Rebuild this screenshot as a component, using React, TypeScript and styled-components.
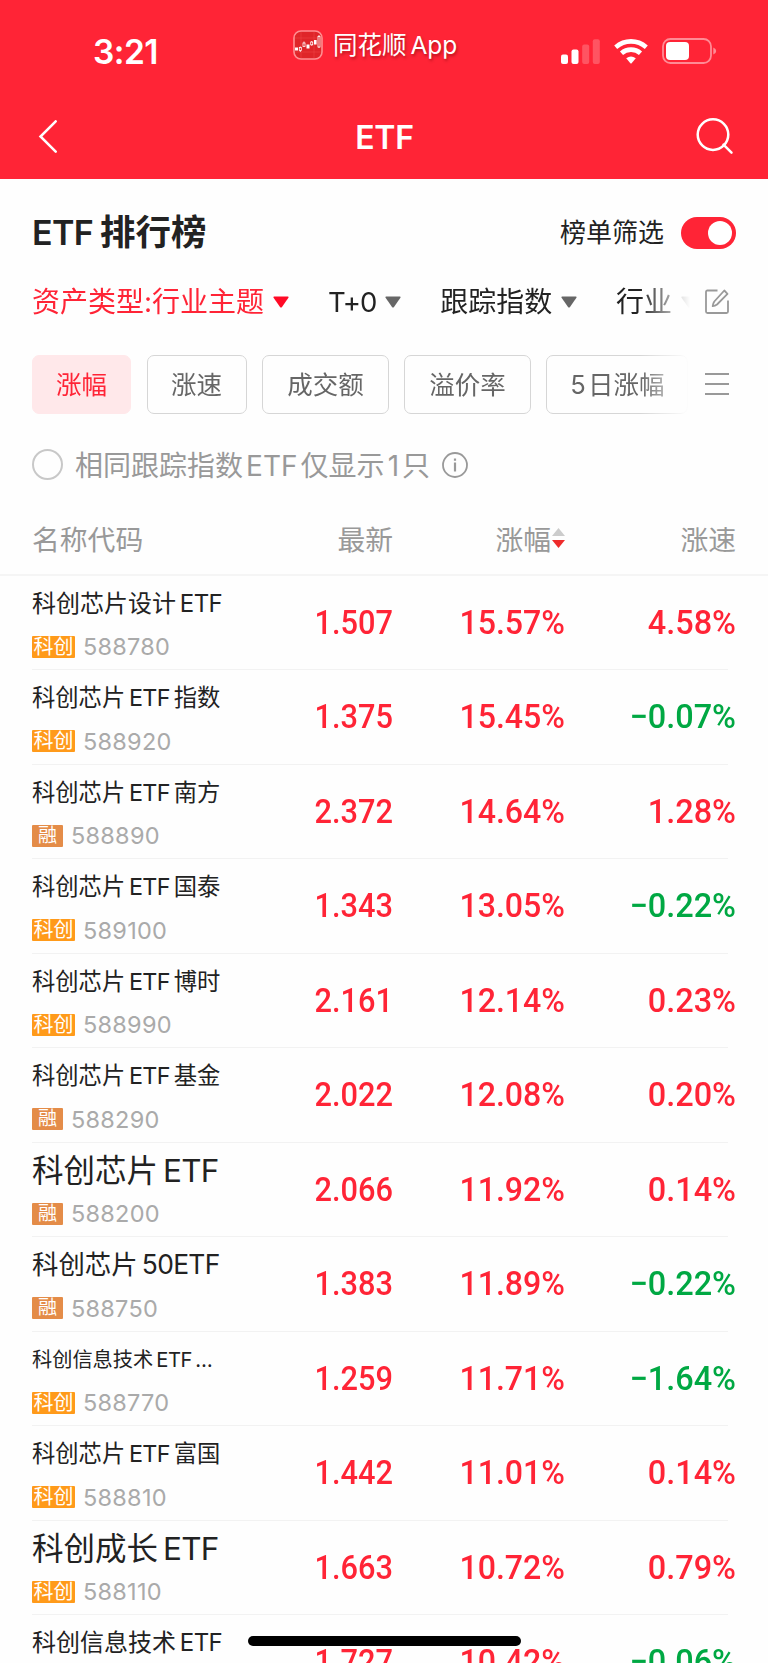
import React from 'react';
import styled, { createGlobalStyle } from 'styled-components';

const Global = createGlobalStyle`
  * { box-sizing: border-box; }
  html, body { margin: 0; background: #fff; }
  body { font-family: Inter, "Noto Sans CJK SC", sans-serif; width: 768px; height: 1663px; overflow: hidden; }
  svg { flex: none; display: block; }
`;

const Screen = styled.div`
  position: relative;
  width: 768px;
  height: 1663px;
  overflow: hidden;
  background: #fefefe;
  color: #222;
`;
const Header = styled.header`
  height: 179px;
  background: #ff2436;
  color: #fff;
`;
const StatusBar = styled.div`
  height: 96px;
  display: grid;
  grid-template-columns: 252px 1fr 252px;
  align-items: start;
`;
const Clock = styled.div`
  margin-top: 33px;
  padding-right: 1px;
  text-align: center;
  font-size: 33.5px;
  line-height: 38px;
  font-weight: 600;
  letter-spacing: -0.5px;
`;
const AppLabel = styled.div`
  display: flex;
  align-items: center;
  gap: 10px;
  margin: 29px 0 0 41px;
  height: 31px;
  font-size: 24.5px;
  word-spacing: -3px;
  text-shadow: 1px 2px 3px rgba(90, 0, 0, 0.45);
  white-space: nowrap;
  span { padding-bottom: 3px; }
`;
const StatusIcons = styled.div`
  display: flex;
  justify-content: flex-end;
  align-items: center;
  padding: 38px 51px 0 0;
  gap: 14px;
`;
const NavBar = styled.div`
  height: 83px;
  display: grid;
  grid-template-columns: 1fr auto 1fr;
  align-items: center;
  padding: 0 34px 2px 37px;
  font-size: 32px;
  font-weight: 600;
  letter-spacing: -0.3px;
  span { padding: 2px 2px 0 0; }
  svg:last-child { justify-self: end; }
`;
const TitleRow = styled.div`
  height: 107px;
  display: flex;
  align-items: center;
  padding: 0 32px;
`;
const Title = styled.h1`
  margin: 0;
  padding-bottom: 6px;
  flex: 1;
  display: flex;
  align-items: baseline;
  gap: 7px;
  font-size: 35.5px;
  font-weight: 600;
`;
const TitleLatin = styled.span`
  font-size: 34px;
  letter-spacing: -0.7px;
`;
const Toggle = styled.div`
  width: 55px;
  height: 32px;
  border-radius: 16px;
  background: #ff2436;
  padding: 4px;
  margin-left: 17px;
  display: flex;
  justify-content: flex-end;
  &::after { content: ""; width: 24px; height: 24px; border-radius: 50%; background: #fff; }
`;
const ToggleLabel = styled.span`
  font-size: 26px;
  padding-bottom: 4px;
`;
const FilterRow = styled.div`
  height: 31px;
  display: flex;
  align-items: center;
  padding: 0 39px 0 32px;
  justify-content: space-between;
`;
const ChipRow = styled(FilterRow)`
  height: 108px;
  padding-top: 26px;
`;
const FadeStrip = styled.div<{ $gap: number }>`
  width: 658px;
  display: flex;
  align-items: center;
  gap: ${p => p.$gap}px;
  overflow: hidden;
  white-space: nowrap;
  mask-image: linear-gradient(to right, #000 608px, transparent 658px);
`;
const Filter = styled.div<{ $on?: boolean }>`
  display: flex;
  align-items: center;
  flex: none;
  gap: 8.5px;
  font-size: 28px;
  line-height: 40px;
  color: ${p => (p.$on ? '#ff2436' : '#222')};
`;
const FilterLatin = styled.span`
  font-size: 27.5px;
  letter-spacing: -0.9px;
`;
const Chip = styled.div<{ $on?: boolean; $w: number }>`
  flex: none;
  width: ${p => p.$w}px;
  height: 59px;
  padding-bottom: 4px;
  display: flex;
  align-items: center;
  justify-content: center;
  border-radius: 7px;
  font-size: 25.5px;
  word-spacing: -5px;
  border: 1px solid ${p => (p.$on ? '#ffe8ea' : '#d6d6d6')};
  background: ${p => (p.$on ? '#ffe8ea' : 'transparent')};
  color: ${p => (p.$on ? '#ff2436' : '#666')};
`;
const OptionRow = styled.div`
  height: 80px;
  display: flex;
  align-items: center;
  padding: 0 32px 1px;
  font-size: 28px;
  word-spacing: -4.8px;
  color: #999;
  gap: 12px;
  span { padding-bottom: 1px; }
`;
const Radio = styled.i`
  width: 31px;
  height: 31px;
  border: 2px solid #c8c8c8;
  border-radius: 50%;
`;
const columns = '200px 161px 172px 171px';
const TableHead = styled.div`
  height: 70.5px;
  display: grid;
  grid-template-columns: ${columns};
  align-items: center;
  padding: 0 32px 2px;
  font-size: 27.8px;
  color: #999;
  border-bottom: 2px solid #f5f5f5;
`;
const HeadCell = styled.div`
  display: flex;
  justify-content: flex-end;
  align-items: center;
`;
const Row = styled.div`
  height: 94.5px;
  margin-left: 32px;
  width: 696px;
  display: grid;
  grid-template-columns: ${columns};
  border-bottom: 1px solid #f2f2f2;
`;
const Name = styled.div<{ $size: number }>`
  height: 57px;
  display: flex;
  align-items: baseline;
  gap: 0.16em;
  white-space: nowrap;
  font-size: ${p => p.$size}px;
  line-height: 55px;
`;
const NamePart = styled.span<{ $latin: boolean }>`
  letter-spacing: ${p => (p.$latin ? '-0.025em' : '0')};
`;
const CodeLine = styled.div`
  display: flex;
  align-items: center;
  height: 28px;
  gap: 8px;
  font-size: 23.5px;
  letter-spacing: 0.25px;
  color: #aaa;
`;
const Badge = styled.span<{ $wide: boolean }>`
  width: ${p => (p.$wide ? 43 : 31)}px;
  height: 22px;
  display: flex;
  align-items: center;
  justify-content: center;
  border-radius: 1px;
  color: #fff;
  font-size: ${p => (p.$wide ? 20 : 19)}px;
  letter-spacing: 0;
  line-height: 22px;
  background: ${p => (p.$wide ? '#ff9a1a' : '#e48c48')};
`;
const Value = styled.div<{ $down?: boolean; $stretch: number }>`
  text-align: right;
  font: 500 33.8px/94px Roboto, sans-serif;
  color: ${p => (p.$down ? '#00a843' : '#ff2436')};
  transform: scaleX(${p => p.$stretch});
  transform-origin: right;
`;
const HomeIndicator = styled.div`
  position: absolute;
  left: 248px;
  top: 1636px;
  width: 273px;
  height: 10px;
  border-radius: 5px;
  background: #000;
`;

type Fund = { name: string; size: number; code?: string; margin?: boolean; price: string; change: string; speed: string };

const funds: Fund[] = [
  { name: '科创芯片设计 ETF', size: 24, code: '588780', price: '1.507', change: '15.57%', speed: '4.58%' },
  { name: '科创芯片 ETF 指数', size: 23.3, code: '588920', price: '1.375', change: '15.45%', speed: '−0.07%' },
  { name: '科创芯片 ETF 南方', size: 23.3, code: '588890', margin: true, price: '2.372', change: '14.64%', speed: '1.28%' },
  { name: '科创芯片 ETF 国泰', size: 23.3, code: '589100', price: '1.343', change: '13.05%', speed: '−0.22%' },
  { name: '科创芯片 ETF 博时', size: 23.3, code: '588990', price: '2.161', change: '12.14%', speed: '0.23%' },
  { name: '科创芯片 ETF 基金', size: 23.3, code: '588290', margin: true, price: '2.022', change: '12.08%', speed: '0.20%' },
  { name: '科创芯片 ETF', size: 31.5, code: '588200', margin: true, price: '2.066', change: '11.92%', speed: '0.14%' },
  { name: '科创芯片 50ETF', size: 26.4, code: '588750', margin: true, price: '1.383', change: '11.89%', speed: '−0.22%' },
  { name: '科创信息技术 ETF …', size: 20.2, code: '588770', price: '1.259', change: '11.71%', speed: '−1.64%' },
  { name: '科创芯片 ETF 富国', size: 23.3, code: '588810', price: '1.442', change: '11.01%', speed: '0.14%' },
  { name: '科创成长 ETF', size: 31.5, code: '588110', price: '1.663', change: '10.72%', speed: '0.79%' },
  { name: '科创信息技术 ETF', size: 24, price: '1.727', change: '10.42%', speed: '−0.06%' },
];

const Caret = ({ c }: { c: string }) => (
  <svg width="16" height="12" viewBox="0 0 16 12"><path d="M1 0.5h14q1 .3.4 1.3L9 11q-1 1-2 0L.6 1.8Q0 .8 1 .5z" fill={c} /></svg>
);

const AppLogo = () => (
  <svg width="30" height="30" viewBox="0 0 30 30">
    <rect x="1" y="1" width="28" height="28" rx="7" fill="#df2529" stroke="#ff8f92" strokeWidth="1.6" />
    <path d="M2 8h26M2 22h26M8 2v26M21 2v26" stroke="#ef4a4b" strokeWidth=".5" />
    <g fill="#fff"><path d="M2 17.5h3v3H2zM13.5 14.5h3v4h-3zM21 10h2.6v4.5H21z" /></g>
    <g fill="none" stroke="#fff" strokeWidth=".8">
      <rect x="6.3" y="17.5" width="2" height="3" /><path d="M7.3 16.5v1M7.3 20.5v1.5" />
      <rect x="10" y="13" width="2" height="3.5" /><path d="M11 11.5v1.5" />
      <rect x="17.7" y="12" width="2" height="2.8" /><path d="M18.7 11v1M18.7 14.8v1" />
      <rect x="25" y="6.5" width="2" height="10.5" /><path d="M26 5v1.5M26 17v1" />
    </g>
  </svg>
);

const Signal = () => (
  <svg width="39" height="25" viewBox="0 0 39 25" fill="#fff">
    <rect x="0" y="15.5" width="7" height="9.5" rx="2" /><rect x="10.5" y="10.5" width="7" height="14.5" rx="2" />
    <g opacity=".22"><rect x="21.2" y="5.5" width="7" height="19.5" rx="2" /><rect x="31.8" y=".3" width="7" height="24.7" rx="2" /></g>
  </svg>
);

const Wifi = () => (
  <svg width="34" height="25" viewBox="0 0 34 25">
    <g fill="none" stroke="#fff" strokeWidth="4.6">
      <path d="M1.7 8.2Q8.5 2.4 17 2.4t15.3 5.8" />
      <path d="M7.5 14.2Q11.5 10.6 17 10.6t9.5 3.6" />
    </g>
    <path d="M12.2 19.3Q17 15.6 21.8 19.3L17.6 24.2q-.6.6-1.2 0z" fill="#fff" />
  </svg>
);

const Battery = () => (
  <svg width="55" height="26" viewBox="0 0 55 26">
    <rect x="1" y="1" width="48" height="24" rx="7.5" fill="none" stroke="#ff8b95" strokeWidth="1.8" />
    <rect x="4" y="4" width="23" height="18" rx="4" fill="#fff" />
    <path d="M51.3 9.5q2.9 1 2.9 3.5t-2.9 3.5z" fill="#ff8b95" />
  </svg>
);

export default function App() {
  return (
    <Screen>
      <Global />
      <Header>
        <StatusBar>
          <Clock>3:21</Clock>
          <AppLabel><AppLogo /><span>同花顺 App</span></AppLabel>
          <StatusIcons><Signal /><Wifi /><Battery /></StatusIcons>
        </StatusBar>
        <NavBar>
          <svg width="22" height="34" viewBox="0 0 22 34"><path d="M18.7 1.3 3.5 16.5l15.2 15.2" fill="none" stroke="#fff" strokeWidth="2.5" strokeLinecap="round" /></svg>
          <span>ETF</span>
          <svg width="38" height="38" viewBox="0 0 38 38" fill="none" stroke="#fff" strokeWidth="2.5"><circle cx="17" cy="16.6" r="15.3" /><path d="m27.5 26.7 8 8" strokeLinecap="round" /></svg>
        </NavBar>
      </Header>
      <TitleRow>
        <Title><TitleLatin>ETF</TitleLatin>排行榜</Title>
        <ToggleLabel>榜单筛选</ToggleLabel>
        <Toggle />
      </TitleRow>
      <FilterRow>
        <FadeStrip $gap={39.3}>
          <Filter $on><span>资产类型:行业主题</span><Caret c="#ff0a26" /></Filter>
          <Filter><FilterLatin>T+0</FilterLatin><Caret c="#666" /></Filter>
          <Filter><span>跟踪指数</span><Caret c="#666" /></Filter>
          <Filter><span>行业</span><Caret c="#666" /></Filter>
        </FadeStrip>
        <svg width="24" height="26" viewBox="0 0 24 26" fill="none" stroke="#999" strokeWidth="1.8">
          <path d="M12.5 1.5h-10Q1 1.5 1 3v19.5Q1 24 2.5 24h19q1.5 0 1.5-1.5v-11" />
          <path d="M19.3 1.5 22.5 4.8 12 15.5q-2 1.5-4.3 1.6.2-2.6 1.6-4.6z" strokeLinejoin="round" />
        </svg>
      </FilterRow>
      <ChipRow>
        <FadeStrip $gap={15.6}>
          <Chip $on $w={99}>涨幅</Chip>
          <Chip $w={100}>涨速</Chip>
          <Chip $w={126.5}>成交额</Chip>
          <Chip $w={126.5}>溢价率</Chip>
          <Chip $w={142}>5 日涨幅</Chip>
        </FadeStrip>
        <svg width="24" height="22" viewBox="0 0 24 22" stroke="#999" strokeWidth="2"><path d="M0 1h24M0 11h24M0 21h24" /></svg>
      </ChipRow>
      <OptionRow>
        <Radio /><span>相同跟踪指数 ETF 仅显示 1 只</span>
        <svg width="26" height="26" viewBox="0 0 26 26" fill="none" stroke="#999" strokeWidth="1.8"><circle cx="13" cy="13" r="12" /><path d="M13 10.5v9M13 6.5v2.2" strokeWidth="2.2" /></svg>
      </OptionRow>
      <TableHead>
        <span>名称代码</span>
        <HeadCell>最新</HeadCell>
        <HeadCell>
          涨幅
          <svg width="14" height="20" viewBox="0 0 14 20"><path d="M7.5 0 14 8H1z" fill="#ccc" /><path d="M1 12h13l-6.5 8z" fill="#ee2b2b" /></svg>
        </HeadCell>
        <HeadCell>涨速</HeadCell>
      </TableHead>
      {funds.map(f => (
        <Row key={f.name}>
          <div>
            <Name $size={f.size}>
              {f.name.split(' ').map(part => (
                <NamePart key={part} $latin={/[A-Z]/.test(part)}>{part}</NamePart>
              ))}
            </Name>
            {f.code && <CodeLine><Badge $wide={!f.margin}>{f.margin ? '融' : '科创'}</Badge>{f.code}</CodeLine>}
          </div>
          <Value $stretch={0.91}>{f.price}</Value>
          <Value $stretch={0.95}>{f.change}</Value>
          <Value $stretch={0.96} $down={f.speed[0] === '−'}>{f.speed}</Value>
        </Row>
      ))}
      <HomeIndicator />
    </Screen>
  );
}
